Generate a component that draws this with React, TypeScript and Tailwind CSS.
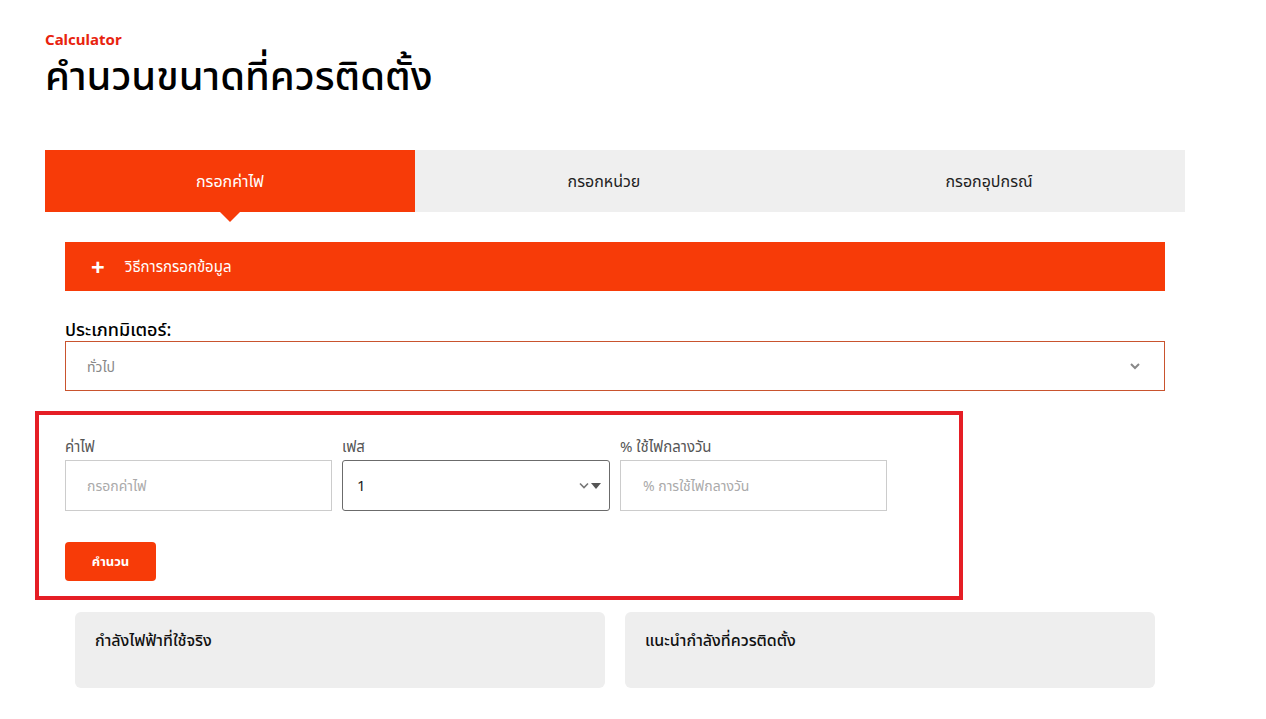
import React from "react";

export default function App() {
  const font = { fontFamily: '"Noto Sans", "Noto Sans Thai", Tahoma, sans-serif' };
  return (
    <div className="w-[1266px] h-[719px] bg-white overflow-hidden" style={font}>
      <div className="pl-[45px] pt-[30px]">
        <div className="text-[15px] font-bold text-[#e8230e] leading-[18px]">Calculator</div>
        <h1 className="text-[40px] font-medium text-black leading-[50px] mt-[2px]">คำนวนขนาดที่ควรติดตั้ง</h1>
      </div>

      <div className="ml-[45px] mt-[50px] w-[1140px] flex h-[62px]">
        <div className="relative w-[370px] bg-[#f73b08] flex items-center justify-center text-white text-[16px]">
          กรอกค่าไฟ
          <div className="absolute left-1/2 -translate-x-1/2 top-full w-0 h-0 border-l-[10px] border-r-[10px] border-t-[10px] border-l-transparent border-r-transparent border-t-[#f73b08]" />
        </div>
        <div className="w-[378px] bg-[#efefef] flex items-center justify-center text-[#222] text-[16px]">กรอกหน่วย</div>
        <div className="w-[392px] bg-[#efefef] flex items-center justify-center text-[#222] text-[16px]">กรอกอุปกรณ์</div>
      </div>

      <div className="ml-[65px] mt-[30px] w-[1100px] h-[49px] bg-[#f73b08] flex items-center pl-[26px] text-white text-[15px]">
        <span className="text-[24px] font-bold leading-none w-[34px]">+</span>
        <span>วิธีการกรอกข้อมูล</span>
      </div>

      <div className="ml-[65px] mt-[26px] text-[18px] font-medium text-black leading-[24px]">ประเภทมิเตอร์:</div>
      <div className="ml-[65px] w-[1100px] h-[50px] border border-[#c9542e] flex items-center justify-between px-[21px] text-[14px] text-[#888]">
        <span>ทั่วไป</span>
        <svg width="12" height="8" viewBox="0 0 12 8" className="mr-[2px]"><path d="M2 2l4 4 4-4" stroke="#888" strokeWidth="2" fill="none" /></svg>
      </div>

      <div className="ml-[35px] mt-[20px] w-[928px] h-[189px] border-[4px] border-[#e51e25] pl-[26px] pt-[21px]">
        <div className="flex gap-[10px]">
          <div className="w-[267px]">
            <div className="text-[15px] text-[#555] leading-[20px] mb-[4px]">ค่าไฟ</div>
            <div className="h-[51px] border border-[#ccc] flex items-center pl-[21px] text-[14px] text-[#aaa]">กรอกค่าไฟ</div>
          </div>
          <div className="w-[268px]">
            <div className="text-[15px] text-[#555] leading-[20px] mb-[4px]">เฟส</div>
            <div className="h-[51px] border border-[#6b6b6b] rounded-[3px] flex items-center justify-between pl-[14px] pr-[8px] text-[15px] text-[#222]">
              <span>1</span>
              <span className="flex items-center gap-[2px]">
                <svg width="10" height="7" viewBox="0 0 10 7"><path d="M1 1.5l4 4 4-4" stroke="#777" strokeWidth="1.6" fill="none" /></svg>
                <svg width="10" height="6" viewBox="0 0 10 6"><path d="M0 0h10L5 6z" fill="#555" /></svg>
              </span>
            </div>
          </div>
          <div className="w-[267px]">
            <div className="text-[15px] text-[#555] leading-[20px] mb-[4px]">% ใช้ไฟกลางวัน</div>
            <div className="h-[51px] border border-[#ccc] flex items-center pl-[22px] text-[14px] text-[#aaa]">% การใช้ไฟกลางวัน</div>
          </div>
        </div>
        <button className="mt-[31px] w-[91px] h-[39px] bg-[#f73b08] rounded-[4px] text-white text-[13px] font-bold">คำนวน</button>
      </div>

      <div className="ml-[75px] mt-[12px] flex gap-[20px]">
        <div className="w-[530px] h-[76px] bg-[#eeeeee] rounded-[6px] pl-[20px] pt-[16px] text-[16px] font-medium text-[#111]">กำลังไฟฟ้าที่ใช้จริง</div>
        <div className="w-[530px] h-[76px] bg-[#eeeeee] rounded-[6px] pl-[20px] pt-[16px] text-[16px] font-medium text-[#111]">แนะนำกำลังที่ควรติดตั้ง</div>
      </div>
    </div>
  );
}
